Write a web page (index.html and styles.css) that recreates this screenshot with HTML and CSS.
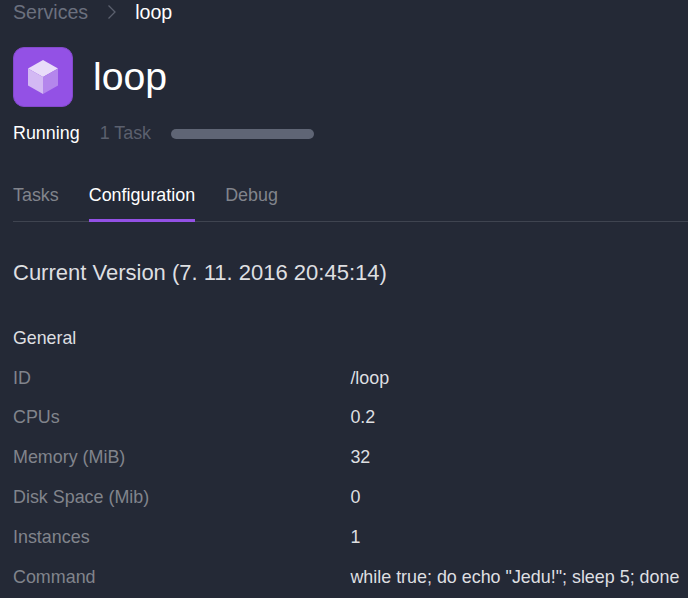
FILE: index.html
```html
<!DOCTYPE html>
<html lang="en">
<head>
  <meta charset="UTF-8">
  <meta name="viewport" content="width=device-width, initial-scale=1.0">
  <title>Services - loop</title>
  <link rel="stylesheet" href="styles.css">
</head>
<body>

  <nav class="breadcrumbs">
    <a class="crumb">Services</a>
    <svg class="chevron" width="10" height="16" viewBox="0 0 10 16">
      <path d="M1.5 1.5 L8 8 L1.5 14.5" fill="none" stroke="#5b606e" stroke-width="1.3"/>
    </svg>
    <a class="crumb crumb-current">loop</a>
  </nav>

  <header class="service-header">
    <div class="service-icon">
      <svg width="30" height="34" viewBox="0 0 30 34">
        <polygon points="15,0 30,8.5 15,17 0,8.5" fill="#e9dcf9"/>
        <polygon points="0,8.5 15,17 15,34 0,25.5" fill="#d3b9f3"/>
        <polygon points="30,8.5 15,17 15,34 30,25.5" fill="#b486ec"/>
      </svg>
    </div>
    <h1>loop</h1>
  </header>

  <div class="status">
    <span class="status-name">Running</span>
    <span class="status-tasks">1 Task</span>
    <div class="status-bar"></div>
  </div>

  <ul class="tabs">
    <li class="tab">Tasks</li>
    <li class="tab tab-active">Configuration</li>
    <li class="tab">Debug</li>
  </ul>

  <main>
    <h2>Current Version (7. 11. 2016 20:45:14)</h2>
    <h3>General</h3>
    <dl class="config">
      <dt>ID</dt>
      <dd>/loop</dd>
      <dt>CPUs</dt>
      <dd>0.2</dd>
      <dt>Memory (MiB)</dt>
      <dd>32</dd>
      <dt>Disk Space (Mib)</dt>
      <dd>0</dd>
      <dt>Instances</dt>
      <dd>1</dd>
      <dt>Command</dt>
      <dd>while true; do echo "Jedu!"; sleep 5; done</dd>
    </dl>
  </main>

</body>
</html>
```
FILE: styles.css
```css
body {
  font-family: "Liberation Sans", Arial, sans-serif;
  font-size: 17.9px;
  line-height: 24px;
  background-color: #242936;
  color: #dedfe1;
  margin: 0;
  padding-left: 13px;
  height: 598px;
  overflow: hidden;
}

h1, h2, h3, ul, dl, dd {
  margin: 0;
  padding: 0;
  font-weight: normal;
}

/* Breadcrumbs */
.breadcrumbs {
  display: flex;
  align-items: center;
  height: 24px;
  font-size: 19.6px;
}

.crumb {
  color: #6b707e;
}

.crumb-current {
  color: #fff;
}

.chevron {
  margin: 0 18px 0 19px;
}

/* Service header */
.service-header {
  display: flex;
  align-items: center;
  gap: 20px;
  margin-top: 23px;
}

.service-icon {
  display: flex;
  align-items: center;
  justify-content: center;
  width: 60px;
  height: 60px;
  box-sizing: border-box;
  background-color: #9351e5;
  border: 1px solid #8349cb;
  border-radius: 11px;
}

h1 {
  color: #fff;
  font-size: 39.2px;
  line-height: 60px;
}

.status {
  display: flex;
  align-items: center;
  margin-top: 14px;
}

.status-name {
  color: #fff;
}

.status-tasks {
  color: #5b606e;
  margin: 0 20px;
}

.status-bar {
  width: 143px;
  height: 10px;
  margin-top: 1px;
  border-radius: 5px;
  background-color: #5f6575;
}

/* Tabs */
.tabs {
  display: flex;
  gap: 30px;
  list-style: none;
  margin-top: 38px;
  height: 38px;
  border-bottom: 1px solid #3f4450;
}

.tab {
  height: 36px;
  color: #81848c;
}

.tab-active {
  color: #fff;
  border-bottom: 3px solid #9351e5;
}

/* Configuration */
h2 {
  margin-top: 36px;
  font-size: 22px;
  line-height: 30px;
}

h3 {
  margin-top: 38px;
  font-size: 17.8px;
}

.config {
  display: grid;
  grid-template-columns: 337.4px 1fr;
  grid-auto-rows: 39.8px;
  line-height: 39.8px;
  margin-top: 8.6px;
  white-space: nowrap;
}

.config dt {
  color: #81848c;
}
```
